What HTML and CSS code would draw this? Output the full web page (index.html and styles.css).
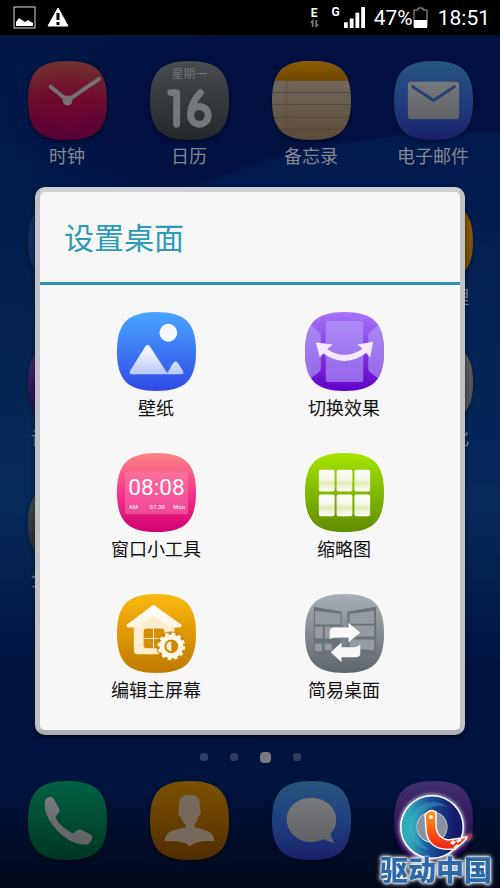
FILE: index.html
```html
<!DOCTYPE html>
<html lang="zh-CN">
<head>
<meta charset="utf-8">
<meta name="viewport" content="width=device-width, initial-scale=1">
<title>设置桌面</title>
<link rel="stylesheet" href="styles.css">
</head>
<body>
<svg class="defs" aria-hidden="true">
  <defs>
    <path id="tile" d="M40 0C69 0 80 11 80 40S69 80 40 80 0 69 0 40 11 0 40 0Z"/>
    <clipPath id="tileClip"><use href="#tile"/></clipPath>
    <linearGradient id="gClock" x2="0" y2="1"><stop stop-color="#73332f"/><stop offset=".5" stop-color="#6a0c2e"/><stop offset="1" stop-color="#570037"/></linearGradient>
    <linearGradient id="gCal" x2="0" y2="1"><stop stop-color="#494d52"/><stop offset="1" stop-color="#23272b"/></linearGradient>
    <linearGradient id="gGray" x2="0" y2="1"><stop stop-color="#5c5e62"/><stop offset="1" stop-color="#4b4c4f"/></linearGradient>
    <linearGradient id="gNote" x2="0" y2="1"><stop stop-color="#77726a"/><stop offset="1" stop-color="#5b4c36"/></linearGradient>
    <linearGradient id="gBar" x2="0" y2="1"><stop stop-color="#8c5c04"/><stop offset="1" stop-color="#704600"/></linearGradient>
    <linearGradient id="gMail" x2="0" y2="1"><stop stop-color="#26557c"/><stop offset=".5" stop-color="#203f80"/><stop offset="1" stop-color="#18216b"/></linearGradient>
    <linearGradient id="gBlue" x2="0" y2="1"><stop stop-color="#12305e"/><stop offset="1" stop-color="#1a2460"/></linearGradient>
    <linearGradient id="gPhone" x2="0" y2="1"><stop stop-color="#006243"/><stop offset="1" stop-color="#003624"/></linearGradient>
    <linearGradient id="gPerson" x2="0" y2="1"><stop stop-color="#7c5200"/><stop offset="1" stop-color="#512c00"/></linearGradient>
    <linearGradient id="gPurple" x2="0" y2="1"><stop stop-color="#40306e"/><stop offset="1" stop-color="#26004e"/></linearGradient>
    <linearGradient id="gGlyph" x2="0" y2="1"><stop stop-color="#77797c"/><stop offset="1" stop-color="#5f6165"/></linearGradient>
    <linearGradient id="gWall" x2="0" y2="1"><stop stop-color="#49a5ff"/><stop offset="1" stop-color="#3049e6"/></linearGradient>
    <linearGradient id="gPeak" x2="0" y2="1"><stop stop-color="#fff"/><stop offset="1" stop-color="#b9c8fb"/></linearGradient>
    <linearGradient id="gSwitch" x2="0" y2="1"><stop stop-color="#a774fa"/><stop offset="1" stop-color="#6000c8"/></linearGradient>
    <linearGradient id="gWidget" x2="0" y2="1"><stop stop-color="#fc8683"/><stop offset=".5" stop-color="#f4368a"/><stop offset="1" stop-color="#d10073"/></linearGradient>
    <linearGradient id="gThumb" x2="0" y2="1"><stop stop-color="#a5e400"/><stop offset="1" stop-color="#5f8c00"/></linearGradient>
    <linearGradient id="gCell" x2="0" y2="1"><stop stop-color="#fff"/><stop offset=".45" stop-color="#f3f7e4"/><stop offset=".6" stop-color="#dfeab8"/><stop offset="1" stop-color="#fff"/></linearGradient>
    <linearGradient id="gEdit" x2="0" y2="1"><stop stop-color="#fbb90c"/><stop offset="1" stop-color="#c07800"/></linearGradient>
    <linearGradient id="gHouse" x2="0" y2="1"><stop stop-color="#fff"/><stop offset="1" stop-color="#fff3dc"/></linearGradient>
    <linearGradient id="gEasy" x2="0" y2="1"><stop stop-color="#a9afb6"/><stop offset="1" stop-color="#5d646b"/></linearGradient>
    <linearGradient id="gRing" x2="1" y2="0"><stop stop-color="#2faabb"/><stop offset=".45" stop-color="#1b4f97"/><stop offset="1" stop-color="#161a6b"/></linearGradient>
    <linearGradient id="gBird" x2="0" y2="1"><stop stop-color="#ff9a1c"/><stop offset="1" stop-color="#ee2010"/></linearGradient>
  </defs>
</svg>

<div class="phone">
  <header class="status">
    <div class="status-group">
      <svg class="status-icon" viewBox="0 0 24 24"><rect x="2" y="1" width="21" height="21" fill="none" stroke="#ddd"/><path d="M4 20v-4l3-4 3 2 3 2 3-2 3 2 2 1v3z" fill="#fff"/></svg>
      <svg class="status-icon" viewBox="0 0 24 24"><path d="M12 2 22 20H2Z" fill="#fff" stroke="#fff" stroke-linejoin="round"/><path d="M12 7v7M12 16v3" stroke="#000" stroke-width="3"/></svg>
    </div>
    <div class="status-group right">
      <span class="net"><b>E</b><svg viewBox="0 0 10 10"><path d="M3 9V2M1 4l2-2v6M7 1v7M9 6 7 8V3" fill="none" stroke="#777" stroke-width="2"/></svg></span>
      <b class="carrier">G</b>
      <svg class="signal" viewBox="0 0 22 22"><path d="M0 16h4v6H0zM6 12h4v10H6zM12 6h4v16h-4zM18 0h4v22h-4z" fill="#fff"/></svg>
      <span class="percent">47%</span>
      <svg class="battery" viewBox="0 0 15 21"><path d="M1 20V3h4V1h5v2h4v17z" fill="none" stroke="#aaa"/><path d="M1 13h13v8H1z" fill="#fff"/></svg>
      <time>18:51</time>
    </div>
  </header>

  <main class="home">
    <section class="apps">
      <a class="app" href="#"><svg viewBox="0 0 80 80"><use href="#tile" fill="url(#gClock)"/><circle cx="40" cy="40" r="28" fill="#80002c" opacity=".2"/><path d="m23 26 17 14 32-22" fill="none" stroke="#777075" stroke-width="4" stroke-linecap="round" stroke-linejoin="round"/><circle cx="40" cy="40" r="5" fill="#777075"/></svg><span>时钟</span></a>
      <a class="app" href="#"><svg viewBox="0 0 80 80"><use href="#tile" fill="url(#gCal)"/><text x="40" y="17" class="weekday">星期一</text><path d="M21 32h6v32M51 32C43 41 41 47 41 54" fill="none" stroke="#74777b" stroke-width="7" stroke-linecap="round" stroke-linejoin="round"/><circle cx="50" cy="55" r="9" fill="none" stroke="#74777b" stroke-width="7"/></svg><span>日历</span></a>
      <a class="app" href="#"><svg viewBox="0 0 80 80"><g clip-path="url(#tileClip)"><path d="M0 0h80v80H0z" fill="url(#gNote)"/><path d="M0 0h80v20H0z" fill="url(#gBar)"/><path d="M0 32h80M0 44h80M0 57h80M0 69h80" stroke="#54443f"/><path d="M14 20v60M16 20v60" stroke="#6b433b" stroke-width=".5"/></g></svg><span>备忘录</span></a>
      <a class="app" href="#"><svg viewBox="0 0 80 80"><use href="#tile" fill="url(#gMail)"/><rect x="14" y="21" width="52" height="38" rx="3" fill="url(#gGlyph)"/><path d="m19 26 21 14 21-14" fill="none" stroke="#234378" stroke-width="3" stroke-linecap="round"/></svg><span>电子邮件</span></a>

      <span class="app"><svg viewBox="0 0 80 80"><use href="#tile" fill="url(#gBlue)"/></svg></span>
      <span class="app last"><svg viewBox="0 0 80 80"><use href="#tile" fill="url(#gBar)"/></svg><span>文件管理</span></span>
      <span class="app"><svg viewBox="0 0 80 80"><use href="#tile" fill="url(#gPurple)"/></svg><span>设置中心</span></span>
      <span class="app last"><svg viewBox="0 0 80 80"><use href="#tile" fill="url(#gGray)"/></svg><span>主题美化</span></span>
      <span class="app"><svg viewBox="0 0 80 80"><use href="#tile" fill="url(#gCal)"/></svg><span>全部工具</span></span>
    </section>

    <nav class="pager" aria-label="桌面页">
      <i></i><i></i><i class="on"></i><i></i>
    </nav>

    <footer class="dock">
      <a class="app" href="#" aria-label="电话"><svg viewBox="0 0 80 80"><use href="#tile" fill="url(#gPhone)"/><path d="M17 21C18 16 24 15 26 18L32 29C32 33 28 34 28 37C31 44 39 50 45 53C48 52 49 49 53 49L63 54C67 56 64 62 61 64C48 66 35 57 27 47C21 40 16 31 17 21Z" fill="url(#gGlyph)"/></svg></a>
      <a class="app" href="#" aria-label="联系人"><svg viewBox="0 0 80 80"><use href="#tile" fill="url(#gPerson)"/><path d="M30 20C31 12 49 12 50 20L51 30C52 32 51 35 49 36Q48 41 45 44V47C55 49 65 50 65 61Q53 60 45 63L40 66 36 63Q27 60 15 61C15 50 26 49 36 47V44Q32 41 31 36C29 35 28 32 29 30Z" fill="#74695a"/></svg></a>
      <a class="app" href="#" aria-label="信息"><svg viewBox="0 0 80 80"><use href="#tile" fill="url(#gMail)"/><path d="M40 17C54 17 65 27 65 39Q65 48 59 54L63 63 52 59Q46 62 40 62C26 62 15 52 15 39S26 17 40 17Z" fill="url(#gGlyph)"/></svg></a>
      <a class="app" href="#" aria-label="更多"><svg viewBox="0 0 80 80"><use href="#tile" fill="url(#gPurple)"/></svg></a>
    </footer>
  </main>

  <section class="dialog" role="dialog" aria-labelledby="title">
    <h1 id="title">设置桌面</h1>
    <div class="options">
      <button type="button"><svg viewBox="0 0 80 80"><use href="#tile" fill="url(#gWall)"/><circle cx="52" cy="21" r="9" fill="#f5f9ff"/><path d="M28 36Q31 31 34 36L51 62 56 53Q59 48 62 52L67 60Q68 63 65 63H15Q12 63 13 60Z" fill="url(#gPeak)"/><path d="m47 56 4 6 2-4" fill="none" stroke="#8c9ff0"/></svg><span>壁纸</span></button>
      <button type="button"><svg viewBox="0 0 80 80"><use href="#tile" fill="url(#gSwitch)"/><g clip-path="url(#tileClip)" fill="#b5a2f8" opacity=".6"><rect x="21" y="9" width="38" height="62" rx="2"/><path d="M0 8 14 20Q16 22 16 24V57Q16 59 14 61L0 72ZM80 8 66 20Q64 22 64 24V57Q64 59 66 61L80 72Z"/></g><path d="M18 38Q40 55 62 38" fill="none" stroke="#f3e9ff" stroke-width="6"/><path d="m11 31 17 2-5 4-8 9zM69 30 53 33l5 4 8 9z" fill="#f3e9ff"/></svg><span>切换效果</span></button>
      <button type="button"><svg viewBox="0 0 80 80"><use href="#tile" fill="url(#gWidget)"/><rect x="8" y="19" width="64" height="43" rx="2" fill="#ff85b2" opacity=".45"/><text x="40" y="43" class="digits">08:08</text><text x="12" y="57" class="tiny">AM</text><text x="33" y="57" class="tiny">07.30</text><text x="57" y="57" class="tiny">Mon</text></svg><span>窗口小工具</span></button>
      <button type="button"><svg viewBox="0 0 80 80"><use href="#tile" fill="url(#gThumb)"/><g fill="url(#gCell)"><rect x="14" y="17" width="16" height="22" rx="2"/><rect x="32" y="17" width="16" height="22" rx="2"/><rect x="50" y="17" width="16" height="22" rx="2"/><rect x="14" y="42" width="16" height="22" rx="2"/><rect x="32" y="42" width="16" height="22" rx="2"/><rect x="50" y="42" width="16" height="22" rx="2"/></g></svg><span>缩略图</span></button>
      <button type="button"><svg viewBox="0 0 80 80"><use href="#tile" fill="url(#gEdit)"/><path d="M17 31h41v26q0 4-4 4H21q-4 0-4-4z" fill="#fcecd0"/><path d="M37 11 65 31Q66 34 63 34H12Q9 34 10 31Z" fill="url(#gHouse)"/><path d="M21 34 37 23 54 34z" fill="#fcecd0"/><path d="M30 35h15q3 0 3 3v17H30q-3 0-3-3V38q0-3 3-3z" fill="#d58e06"/><path d="M37 35v20M27 45h21" stroke="#fcecd0"/><circle cx="55" cy="53" r="15" fill="#d08804"/><circle cx="55" cy="53" r="12.500" fill="none" stroke="#fff8e8" stroke-width="3" stroke-dasharray="3.500 3.040"/><circle cx="55" cy="53" r="9.500" fill="none" stroke="#fff8e8" stroke-width="5"/><path d="M55 48a5 5 0 0 0 0 10z" fill="#fff0d0"/></svg><span>编辑主屏幕</span></button>
      <button type="button"><svg viewBox="0 0 80 80"><use href="#tile" fill="url(#gEasy)"/><path d="M9 13 37 18V61H9ZM43 18 72 13V62L43 57Z" fill="#697179"/><path d="M10 17l26 3v11H10zM10 33h8v12h-8zM20 33h16v12H20zM10 50h7v8h-7zM20 50h7v7h-7zM45 20l25-3v13H45zM45 32h25v11H45zM45 46h25v11l-25-2z" fill="#a2a9b1" opacity=".75"/><path d="M25 46V38Q25 34 30 34H44V29L56 39 44 49V44H32Q27 44 25 46ZM56 51V60Q56 64 51 64H37V69L26 59 37 49V54H49Q54 54 56 51Z" fill="#f8f8f8"/></svg><span>简易桌面</span></button>
    </div>
  </section>

  <div class="watermark">
    <svg viewBox="0 0 76 68"><circle cx="34" cy="34" r="32" fill="#fff"/><circle cx="34" cy="34" r="15" fill="#8b929f"/><circle cx="34" cy="34" r="23" fill="none" stroke="url(#gRing)" stroke-width="15"/><path d="M13 24C21 8 38 5 50 14 36 10 25 17 19 28 16 39 21 50 31 57 13 54 7 37 13 24Z" fill="#43c5ce" opacity=".35"/><path d="M27 22Q32 15 38 19V34Q39 45 50 47L70 44 64 50 57 56Q29 59 28 36Z" fill="url(#gBird)" stroke="#fff" stroke-width="1.500"/><path d="m52 50 3-3 3 2-3 3zM58 48l4-3 2 2-4 3zM55 55l4-4 2 2-3 3z" fill="#fff"/><path d="m70 43 4-2-1 4-4 1z" fill="#e62117"/><circle cx="33" cy="24" r="2" fill="#fff"/></svg>
    <strong>驱动中国</strong>
  </div>
</div>
</body>
</html>
```
FILE: styles.css
```css
* {
  box-sizing: border-box;
}

body {
  margin: 0;
  background: #000820;
  font-family: Roboto, "Noto Sans CJK SC", sans-serif;
}

.defs {
  position: absolute;
  width: 0;
  height: 0;
}

svg {
  display: block;
}

.phone {
  position: relative;
  display: grid;
  grid-template-rows: auto 1fr;
  min-height: 100vh;
}

.status {
  display: flex;
  justify-content: space-between;
  height: 35px;
  padding: 0 10px 0 12px;
  background: #000;
  color: #fff;
}

.status-group {
  display: flex;
  align-items: center;
  gap: 10px;
}

.status-icon {
  width: 24px;
  height: 24px;
}

.right {
  gap: 0;
  font-size: 21px;
}

.net {
  display: grid;
  justify-items: center;
  margin-right: 13px;
  font-size: 12px;
  line-height: 12px;
}

.net svg {
  width: 9px;
  height: 9px;
}

.carrier {
  align-self: flex-start;
  margin: 5px 4px 0 0;
  font-size: 12px;
  line-height: 14px;
}

.signal {
  width: 21px;
  height: 21px;
  margin-right: 9px;
}

.battery {
  width: 15px;
  height: 21px;
  margin-right: 10px;
}

.home {
  display: flex;
  flex-direction: column;
  padding: 26px 6px 28px;
  background:
    radial-gradient(ellipse 90% 24% at 96% 32%, #04245a80 0 85%, transparent 87%),
    radial-gradient(ellipse 80% 16% at 80% 10%, #000b3c90 0 70%, transparent 100%),
    linear-gradient(#001746 0, #001a4a 15%, #04234f 35%, #062a5a 55%, #00133f 75%, #001440 88%, #000819 100%);
}

.apps,
.dock {
  display: grid;
  grid-template-columns: repeat(4, 1fr);
}

.apps {
  grid-auto-rows: 141px;
}

.app {
  display: flex;
  flex-direction: column;
  align-items: center;
  gap: 5px;
  color: #85888f;
  font-size: 18px;
  line-height: 24px;
  text-decoration: none;
}

.app svg {
  width: 79px;
  height: 79px;
  filter: drop-shadow(0 2px 2px #0006);
}

.app:nth-child(5),
.app:nth-child(7),
.app:nth-child(9) {
  grid-column: 1;
}

.apps .last {
  grid-column: 4;
}

.weekday {
  fill: #74777b;
  font-size: 12px;
  text-anchor: middle;
}

.pager {
  display: flex;
  align-items: center;
  justify-content: center;
  gap: 22px;
  height: 12px;
  margin: auto 0 18px;
}

.pager i {
  width: 8px;
  height: 8px;
  border-radius: 3px;
  background: #303c60;
}

.pager .on {
  width: 11px;
  height: 11px;
  border-radius: 4px;
  background: #777a82;
}

.dialog {
  position: absolute;
  top: 187px;
  right: 35px;
  left: 35px;
  border: 5px solid;
  border-color: #cfd0d4 #c2c2c3 #aeb0b3;
  border-radius: 10px;
  background: #f7f7f7;
  box-shadow: 0 2px 4px #0008;
}

h1 {
  margin: 0;
  padding: 27px 24px 23px;
  border-bottom: 3px solid #2c93b6;
  color: #2c9bb8;
  font-size: 30px;
  font-weight: 400;
  line-height: 40px;
}

.options {
  display: grid;
  grid-template-columns: repeat(2, 188px);
  justify-content: center;
  row-gap: 32px;
  padding: 27px 0;
}

button {
  display: flex;
  flex-direction: column;
  align-items: center;
  gap: 6px;
  padding: 0;
  border: 0;
  background: none;
  color: #111;
  font: inherit;
  font-size: 18px;
  line-height: 24px;
}

button svg {
  width: 79px;
  height: 79px;
}

.digits {
  fill: #fff;
  font-size: 23px;
  text-anchor: middle;
}

.tiny {
  fill: #ffd9e9;
  font-size: 6px;
  font-weight: 700;
}

.watermark {
  position: absolute;
  right: 8px;
  bottom: 1px;
  display: grid;
  justify-items: center;
  color: #2d68a9;
  font-size: 28px;
  line-height: 30px;
  filter: drop-shadow(0 0 2px #fff);
}

.watermark svg {
  width: 76px;
  height: 68px;
}

.watermark strong {
  margin-top: -4px;
  font-weight: 900;
  text-shadow: 0 0 2px #fff, 0 0 3px #fff;
}
```
